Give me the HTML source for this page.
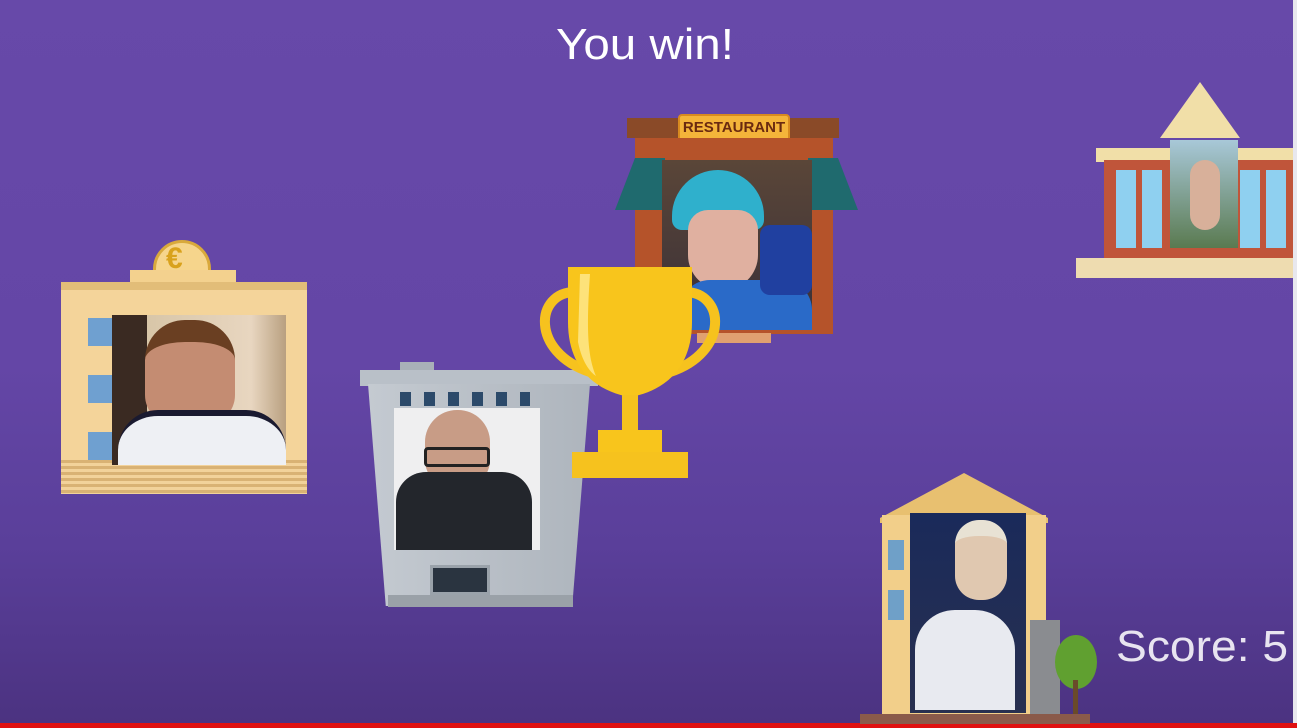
<!DOCTYPE html>
<html><head><meta charset="utf-8"><style>
*{margin:0;padding:0;box-sizing:border-box}
body{width:1297px;height:728px;overflow:hidden;position:relative;background:linear-gradient(#6749a9 0%,#6446a6 50%,#5a3f9a 75%,#4b3280 100%);font-family:"Liberation Sans",sans-serif}
.a{position:absolute}
</style></head><body>
<div class="a" style="left:556px;top:20px;font-size:44px;color:#fff;transform:scaleX(1.08);transform-origin:left">You win!</div>
<div class="a" style="left:1116px;top:622px;font-size:44px;color:#e8e4f0;transform:scaleX(1.05);transform-origin:left">Score: 5</div>
<div class="a" style="left:1293px;top:0;width:4px;height:728px;background:#e8e8ee"></div>
<div class="a" style="left:0;top:723px;width:1297px;height:5px;background:#e01010"></div>

<!-- bank left -->
<div class="a" style="left:153px;top:240px;width:58px;height:40px;background:#f6d58c;border-radius:29px 29px 0 0;border:3px solid #d9a93c"></div>
<div class="a" style="left:166px;top:242px;font-size:30px;color:#d9a21c;font-weight:bold">€</div>
<div class="a" style="left:130px;top:270px;width:106px;height:14px;background:#f3d18e"></div>
<div class="a" style="left:61px;top:282px;width:246px;height:212px;background:#f4d49a;border-top:8px solid #e2bd78"></div>
<div class="a" style="left:61px;top:460px;width:246px;height:34px;background:repeating-linear-gradient(#d9b274 0 3px,#f2d29a 3px 6px)"></div>
<div class="a" style="left:88px;top:318px;width:24px;height:28px;background:#6fa0d0"></div>
<div class="a" style="left:88px;top:375px;width:24px;height:28px;background:#6fa0d0"></div>
<div class="a" style="left:88px;top:432px;width:24px;height:28px;background:#6fa0d0"></div>
<div class="a" style="left:112px;top:315px;width:174px;height:150px;background:linear-gradient(90deg,#3a2a22 0 20%,#d8c6a8 20%,#e8d6c0 80%,#b9a080)"></div>
<div class="a" style="left:145px;top:320px;width:90px;height:105px;background:#c48c72;border-radius:40px 40px 30px 30px;border-top:22px solid #6a3f22"></div>
<div class="a" style="left:118px;top:410px;width:168px;height:55px;background:#eef0f4;border-radius:40px 40px 0 0;border-top:6px solid #1a1a30"></div>

<!-- grey building -->
<div class="a" style="left:400px;top:362px;width:34px;height:12px;background:#a9b0b8"></div>
<div class="a" style="left:360px;top:370px;width:238px;height:16px;background:#b9c0c8"></div>
<div class="a" style="left:368px;top:384px;width:222px;height:222px;background:linear-gradient(90deg,#c4cad1,#aeb5bd);clip-path:polygon(0 0,100% 0,92% 100%,8% 100%)"></div>
<div class="a" style="left:400px;top:392px;width:130px;height:14px;background:repeating-linear-gradient(90deg,#2c4a6a 0 11px,transparent 11px 24px)"></div>
<div class="a" style="left:394px;top:408px;width:146px;height:142px;background:#efeff0"></div>
<div class="a" style="left:425px;top:410px;width:65px;height:78px;background:#c89c86;border-radius:32px 32px 28px 28px"></div>
<div class="a" style="left:424px;top:447px;width:66px;height:20px;border:3px solid #222;border-radius:4px"></div>
<div class="a" style="left:396px;top:472px;width:136px;height:78px;background:#23262c;border-radius:30px 30px 0 0"></div>
<div class="a" style="left:430px;top:565px;width:60px;height:30px;background:#2a3440;border:3px solid #9aa2aa"></div>
<div class="a" style="left:388px;top:595px;width:185px;height:12px;background:#9aa1a8"></div>

<!-- restaurant -->
<div class="a" style="left:627px;top:118px;width:212px;height:20px;background:#8a4a28"></div>
<div class="a" style="left:678px;top:114px;width:112px;height:28px;background:#f4b43a;border:2px solid #d88a20;border-radius:4px;font-size:15px;font-weight:bold;color:#6a2a10;text-align:center;line-height:24px">RESTAURANT</div>
<div class="a" style="left:635px;top:138px;width:198px;height:196px;background:#b5532a"></div>
<div class="a" style="left:615px;top:158px;width:50px;height:52px;background:#1f6a6e;clip-path:polygon(40% 0,100% 0,100% 100%,0 100%)"></div>
<div class="a" style="left:808px;top:158px;width:50px;height:52px;background:#1f6a6e;clip-path:polygon(0 0,60% 0,100% 100%,0 100%)"></div>
<div class="a" style="left:662px;top:160px;width:150px;height:170px;background:linear-gradient(#5a4638,#3a3038)"></div>
<div class="a" style="left:672px;top:170px;width:92px;height:60px;background:#2fb0cc;border-radius:46px 46px 10px 10px"></div>
<div class="a" style="left:688px;top:210px;width:70px;height:80px;background:#e0b0a0;border-radius:20px 20px 35px 35px"></div>
<div class="a" style="left:680px;top:280px;width:132px;height:50px;background:#2a6ac8;border-radius:30px 30px 0 0"></div>
<div class="a" style="left:760px;top:225px;width:52px;height:70px;background:#2040a0;border-radius:10px"></div>
<div class="a" style="left:697px;top:333px;width:74px;height:10px;background:#e0a070"></div>

<!-- trophy -->
<svg class="a" style="left:530px;top:262px" width="200" height="222" viewBox="0 0 200 222">
<path d="M45 30 C5 30 0 90 60 110" fill="none" stroke="#f6c21e" stroke-width="10"/>
<path d="M155 30 C195 30 200 90 140 110" fill="none" stroke="#f6c21e" stroke-width="10"/>
<path d="M38 5 H162 V60 C162 110 130 130 100 135 C70 130 38 110 38 60 Z" fill="#f8c51c"/>
<path d="M50 12 L48 80 C52 100 60 110 66 114 C58 95 56 70 60 12Z" fill="#fde27a"/>
<rect x="92" y="133" width="16" height="38" fill="#f6c21e"/>
<rect x="68" y="168" width="64" height="22" fill="#f8c51c"/>
<rect x="42" y="190" width="116" height="26" fill="#f6c21e"/>
</svg>

<!-- school right -->
<div class="a" style="left:1160px;top:82px;width:80px;height:56px;background:#f1dfa8;clip-path:polygon(50% 0,100% 100%,0 100%)"></div>
<div class="a" style="left:1096px;top:148px;width:197px;height:14px;background:#f1dfa8"></div>
<div class="a" style="left:1104px;top:160px;width:189px;height:100px;background:#c0553a"></div>
<div class="a" style="left:1116px;top:170px;width:48px;height:78px;background:repeating-linear-gradient(90deg,#8fd0f0 0 20px,#c0553a 20px 26px)"></div>
<div class="a" style="left:1240px;top:170px;width:50px;height:78px;background:repeating-linear-gradient(90deg,#8fd0f0 0 20px,#c0553a 20px 26px)"></div>
<div class="a" style="left:1170px;top:140px;width:68px;height:108px;background:linear-gradient(#a8c8d8,#5a7a50)"></div>
<div class="a" style="left:1190px;top:160px;width:30px;height:70px;background:#d8b09a;border-radius:15px"></div>
<div class="a" style="left:1076px;top:258px;width:217px;height:20px;background:#eedcb0"></div>

<!-- xqc building -->
<div class="a" style="left:880px;top:473px;width:168px;height:50px;background:#e8c070;clip-path:polygon(50% 0,100% 90%,100% 100%,0 100%,0 90%)"></div>
<div class="a" style="left:882px;top:515px;width:164px;height:200px;background:#f2cf8a"></div>
<div class="a" style="left:888px;top:540px;width:16px;height:30px;background:#6fa0c8"></div>
<div class="a" style="left:888px;top:590px;width:16px;height:30px;background:#6fa0c8"></div>
<div class="a" style="left:910px;top:513px;width:116px;height:200px;background:linear-gradient(#1a2a5a,#283050)"></div>
<div class="a" style="left:955px;top:520px;width:52px;height:80px;background:#e0c8b0;border-radius:24px;border-top:16px solid #e8e2d4"></div>
<div class="a" style="left:915px;top:610px;width:100px;height:100px;background:#e8eaf0;border-radius:40px 40px 0 0"></div>
<div class="a" style="left:1030px;top:620px;width:30px;height:95px;background:#8a8c90"></div>
<div class="a" style="left:1055px;top:635px;width:42px;height:54px;background:#60a030;border-radius:50%"></div>
<div class="a" style="left:1073px;top:680px;width:5px;height:35px;background:#6a4a2a"></div>
<div class="a" style="left:860px;top:714px;width:230px;height:10px;background:#8a5a4a"></div>
</body></html>
